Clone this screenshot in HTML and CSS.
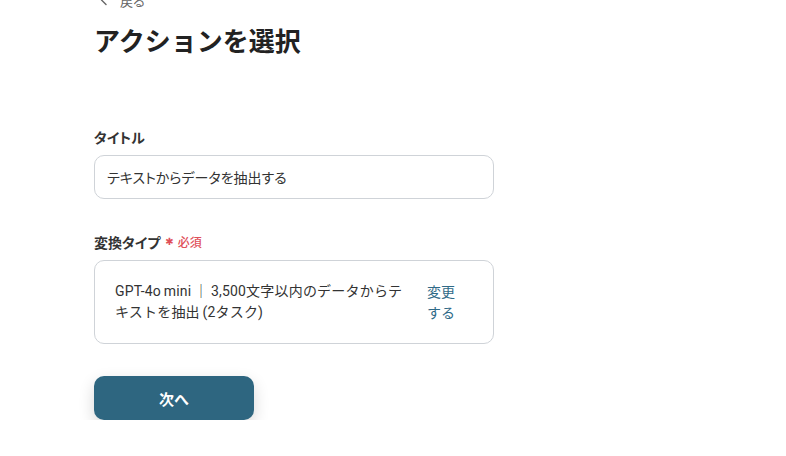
FILE: index.html
```html
<!DOCTYPE html>
<html lang="ja">
<head>
<meta charset="utf-8">
<link rel="stylesheet" href="styles.css">
</head>
<body>
<main class="page">
  <a class="back" href="#">
    <svg class="back-icon" width="12" height="12" viewBox="0 0 12 12"><path d="M8 1.5 3.5 6 8 10.5" fill="none" stroke="#666" stroke-width="1.4" stroke-linecap="round" stroke-linejoin="round"/></svg>
    <span>戻る</span>
  </a>
  <h1 class="title">アクションを選択</h1>

  <section class="field field-title">
    <label class="label">タイトル</label>
    <div class="input">テキストからデータを抽出する</div>
  </section>

  <section class="field field-type">
    <label class="label">変換タイプ <span class="req"><span class="star">✱</span>必須</span></label>
    <div class="select-box">
      <p class="select-text">GPT-4o mini ｜ 3,500文字以内のデータからテキストを抽出 (2タスク)</p>
      <a class="change" href="#">変更する</a>
    </div>
  </section>

  <button class="next">次へ</button>
</main>
</body>
</html>
```

FILE: styles.css
```css
* { box-sizing: border-box; }
html, body { margin: 0; padding: 0; background: #fff; }
body {
  font-family: "Roboto", "Noto Sans CJK JP", sans-serif;
  color: #333;
  overflow: hidden;
}
.page {
  margin-top: -10px;
  padding-left: 94px;
  width: 494px;
  box-sizing: content-box;
}
.back {
  display: flex;
  align-items: center;
  gap: 10px;
  height: 20px;
  padding-left: 4px;
  color: #666;
  font-family: "Noto Sans CJK JP", sans-serif;
  font-size: 13px;
  text-decoration: none;
  font-feature-settings: "palt";
}
.title {
  margin: 10px 0 0;
  font-family: "Noto Sans CJK JP", sans-serif;
  font-size: 26px;
  line-height: 40px;
  font-weight: 700;
  color: #222;
}
.field { display: flex; flex-direction: column; }
.field-title { margin-top: 67px; }
.field-type { margin-top: 33px; }
.label {
  display: flex;
  align-items: center;
  height: 20px;
  font-family: "Noto Sans CJK JP", sans-serif;
  font-size: 14px;
  line-height: 20px;
  font-weight: 700;
  color: #333;
  margin-bottom: 8px;
  font-feature-settings: "palt";
}
.req {
  display: inline-flex;
  align-items: center;
  margin-left: 5px;
  font-size: 12px;
  font-weight: 500;
  color: #e0505a;
}
.star {
  font-family: "DejaVu Sans", sans-serif;
  font-size: 10px;
  margin-right: 4px;
}
.input {
  width: 400px;
  height: 44px;
  border: 1px solid #cfd3d8;
  border-radius: 10px;
  padding: 0 12px;
  display: flex;
  align-items: center;
  font-family: "Noto Sans CJK JP", sans-serif;
  font-size: 14px;
  color: #333;
  font-feature-settings: "palt";
}
.select-box {
  width: 400px;
  height: 84px;
  border: 1px solid #cfd3d8;
  border-radius: 10px;
  padding: 0 20px;
  display: flex;
  align-items: center;
  justify-content: space-between;
  gap: 16px;
}
.select-text {
  margin: 0;
  width: 296px;
  font-size: 14px;
  line-height: 21px;
  letter-spacing: 0.2px;
  word-spacing: -1px;
  color: #333;
}
.change {
  width: 30px;
  font-family: "Noto Sans CJK JP", sans-serif;
  font-size: 14px;
  line-height: 21px;
  color: #2f6a87;
  text-decoration: none;
  margin-right: 16px;
}
.next {
  margin-top: 32px;
  width: 160px;
  height: 44px;
  border: 0;
  border-radius: 10px;
  background: #2e6680;
  color: #fff;
  font-family: "Noto Sans CJK JP", sans-serif;
  font-size: 15px;
  font-weight: 700;
  box-shadow: 0 6px 16px rgba(0,0,0,0.16);
}
```
